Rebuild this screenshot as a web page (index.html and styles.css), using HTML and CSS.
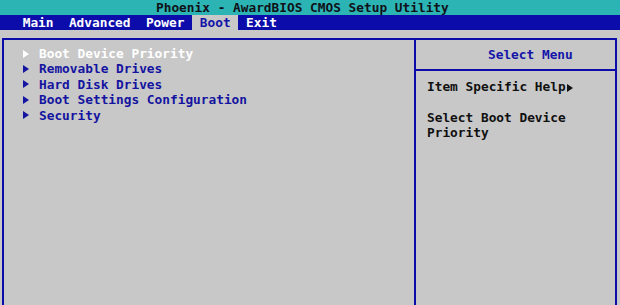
FILE: index.html
```html
<!DOCTYPE html>
<html lang="en">
<head>
  <meta charset="UTF-8" />
  <title>Phoenix - AwardBIOS CMOS Setup Utility</title>
  <link rel="stylesheet" href="styles.css">
</head>
<body>
  <div class="title">Phoenix - AwardBIOS CMOS Setup Utility</div>
  <div class="menubar">
    <span class="tab">Main</span>
    <span class="tab">Advanced</span>
    <span class="tab">Power</span>
    <span class="tab active">Boot</span>
    <span class="tab">Exit</span>
  </div>
  <div class="screen">
    <div class="frame">
      <!-- boot submenu list -->
      <div class="main-pane">
        <div class="item selected"><span class="arrow"></span>Boot Device Priority</div>
        <div class="item"><span class="arrow"></span>Removable Drives</div>
        <div class="item"><span class="arrow"></span>Hard Disk Drives</div>
        <div class="item"><span class="arrow"></span>Boot Settings Configuration</div>
        <div class="item"><span class="arrow"></span>Security</div>
      </div>
      <!-- help side panel -->
      <div class="help-pane">
        <div class="help-head">Select Menu</div>
        <div class="help-body">
          <div>Item Specific Help<span class="arrow dark"></span></div>
          <div class="blank"></div>
          <div>Select Boot Device</div>
          <div>Priority</div>
        </div>
      </div>
    </div>
  </div>
</body>
</html>
```

FILE: styles.css
```css
html, body {
  margin: 0;
  padding: 0;
}
body {
  width: 620px;
  height: 305px;
  overflow: hidden;
  background: #c8c8c8;
  font-family: "DejaVu Sans Mono", "Liberation Mono", monospace;
  font-weight: bold;
  font-size: 12.8px;
  display: flex;
  flex-direction: column;
}
.title {
  height: 15px;
  line-height: 15px;
  background: #2cb4b4;
  color: #101018;
  padding-left: 156px;
  white-space: pre;
}
.menubar {
  height: 15px;
  line-height: 15px;
  background: #0c0caa;
  color: #ffffff;
  padding-left: 15px;
  display: flex;
}
.tab {
  padding: 0 7.7px;
}
.tab.active {
  background: #c8c8c8;
  color: #1414a8;
}
.screen {
  flex: 1;
  padding: 8px 3px 0 2px;
  display: flex;
}
.frame {
  flex: 1;
  display: flex;
  border: 2px solid #0c0caa;
  border-bottom: none;
}
.main-pane {
  width: 412px;
  border-right: 2px solid #0c0caa;
  padding: 6px 0 0 19px;
  box-sizing: border-box;
}
.item {
  height: 15.4px;
  line-height: 15.4px;
  color: #1414a0;
  display: flex;
  align-items: center;
}
.item.selected {
  color: #ffffff;
}
.arrow {
  display: inline-block;
  width: 0;
  height: 0;
  border-left: 6px solid currentColor;
  border-top: 4px solid transparent;
  border-bottom: 4px solid transparent;
  margin-right: 10px;
}
.arrow.dark {
  margin: 0 0 0 1px;
  vertical-align: -1px;
}
.help-pane {
  flex: 1;
  display: flex;
  flex-direction: column;
}
.help-head {
  height: 29px;
  line-height: 29px;
  padding-left: 72px;
  color: #1414a8;
  border-bottom: 2px solid #0c0caa;
}
.help-body {
  padding: 8px 0 0 11px;
  color: #101010;
  line-height: 15.3px;
}
.blank {
  height: 15.3px;
}
```
